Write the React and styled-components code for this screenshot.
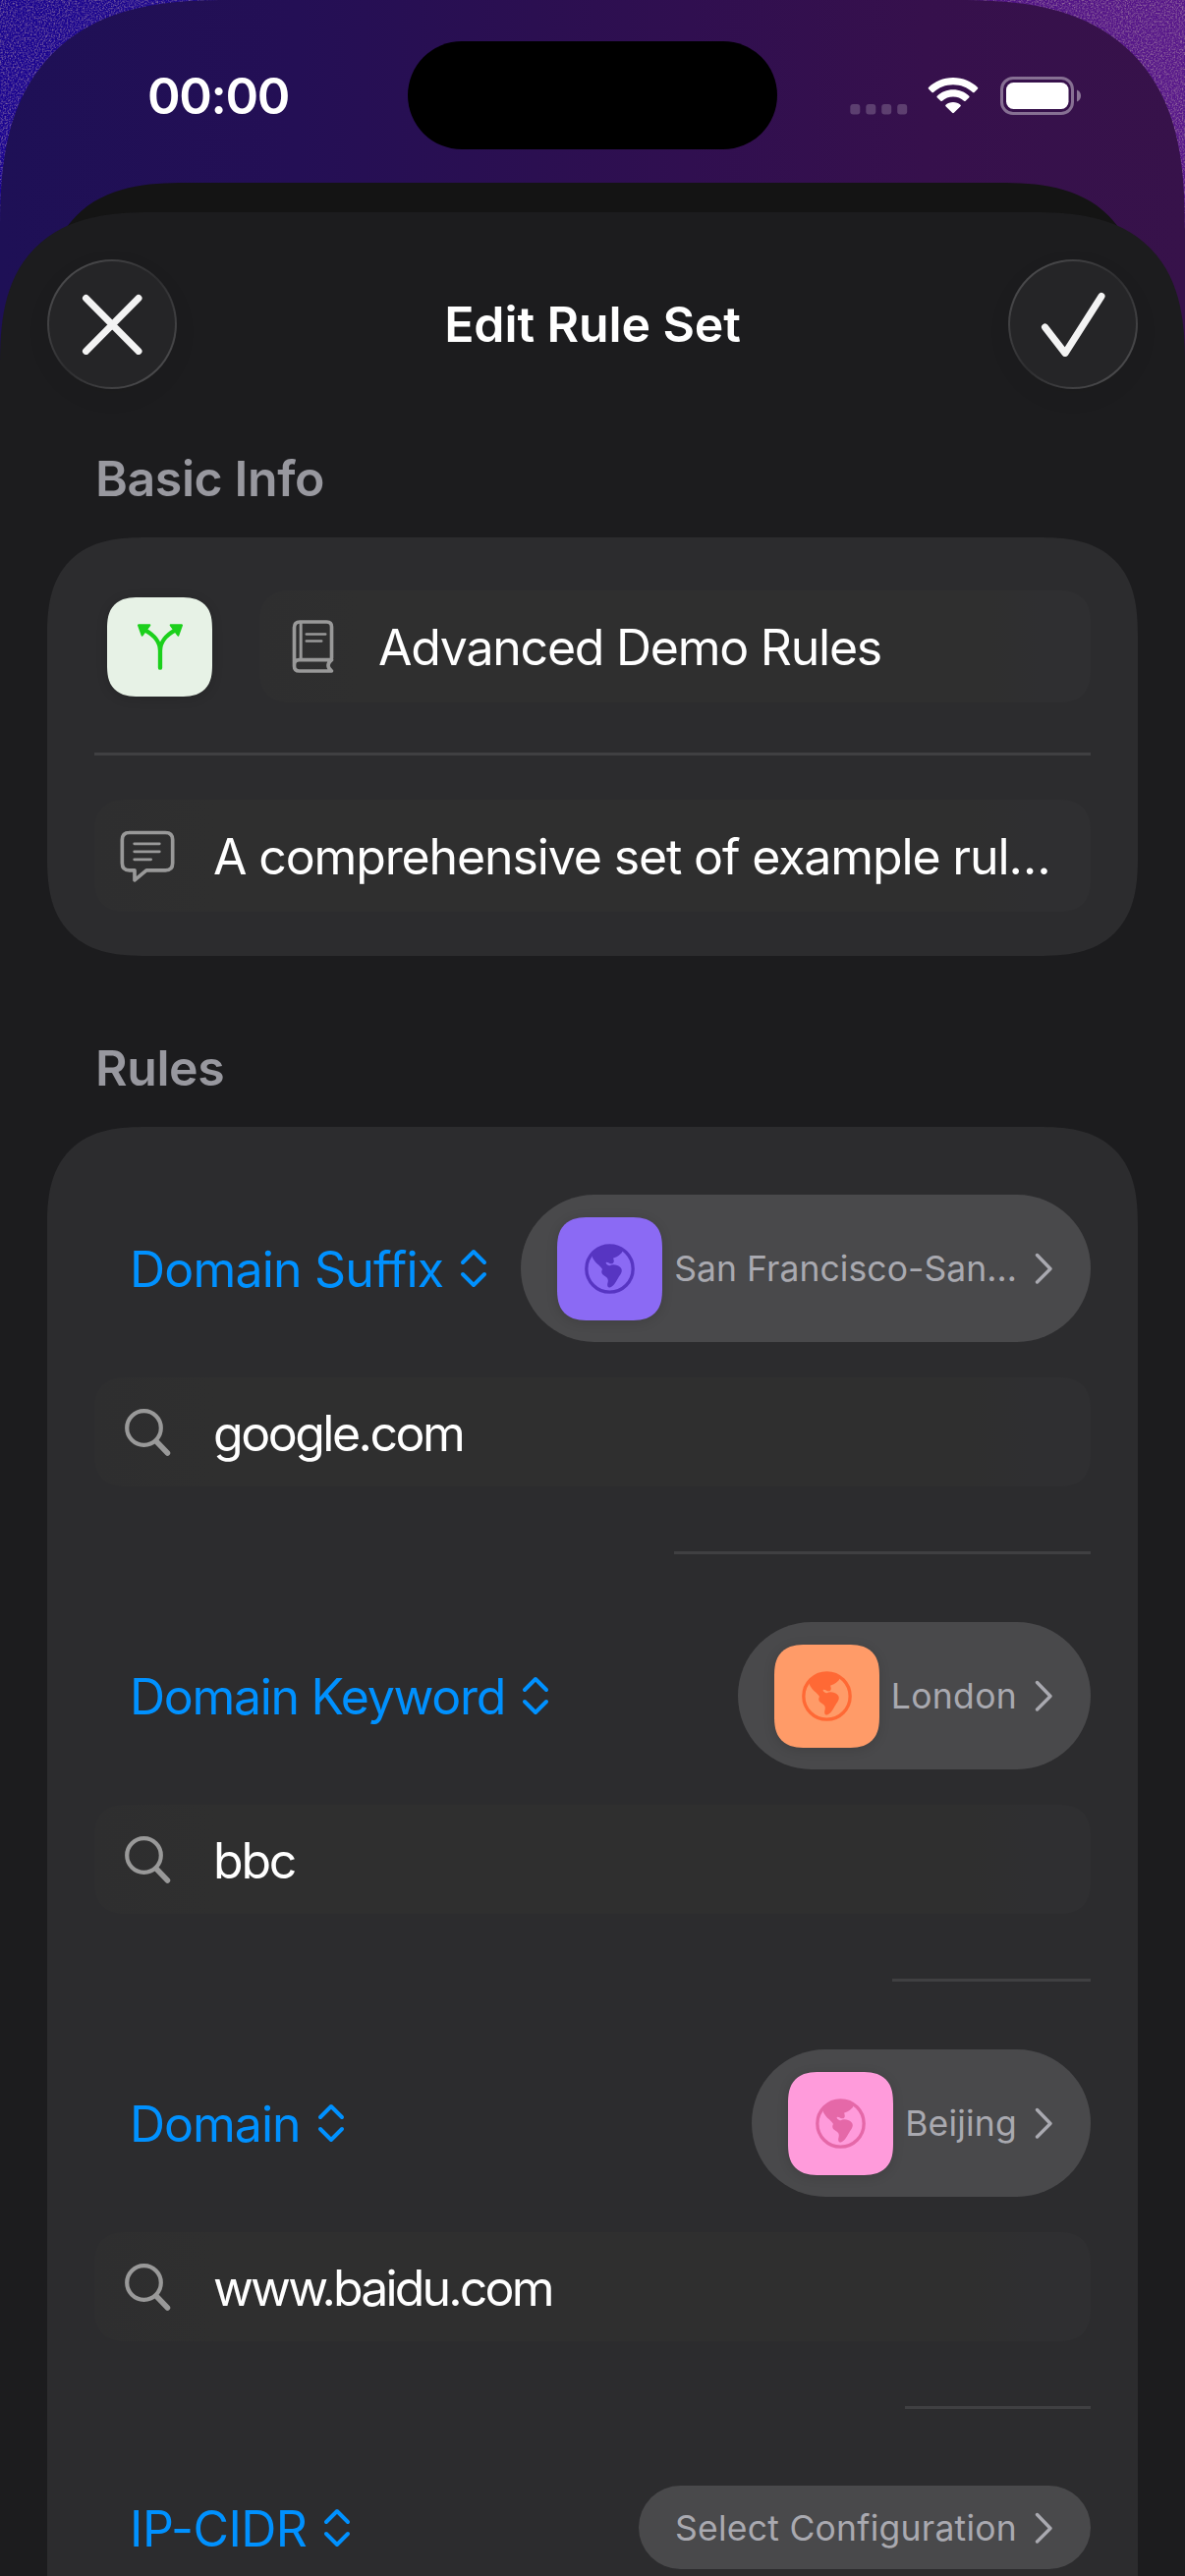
import React from "react";
import styled, { createGlobalStyle, css } from "styled-components";

const GlobalStyle = createGlobalStyle`
  * {
    box-sizing: border-box;
  }
  body {
    margin: 0;
    background: #1c1c1e;
    font-family: Inter, "Liberation Sans", sans-serif;
  }
  svg {
    display: block;
    flex-shrink: 0;
  }
`;

// iOS style continuous corners, plain radius where corner-shape is missing
const smooth = (r) => css`
  border-radius: ${r}px;
  @supports (corner-shape: superellipse(1.4)) {
    border-radius: ${r * 1.3}px;
    corner-shape: superellipse(1.4);
  }
`;

const smoothTop = (r) => css`
  border-radius: ${r}px ${r}px 0 0;
  @supports (corner-shape: superellipse(1.4)) {
    border-radius: ${r * 1.3}px ${r * 1.3}px 0 0;
    corner-shape: superellipse(1.4);
  }
`;

const Screen = styled.div`
  position: relative;
  width: 1206px;
  height: 2622px;
  overflow: hidden;
  background: linear-gradient(90deg, #1a0490, #200a8c 25%, #4a1080 75%, #58188a);
`;

const Noise = styled.svg`
  position: absolute;
  inset: 0;
`;

const Phone = styled.div`
  position: relative;
  display: flex;
  flex-direction: column;
  height: 100%;
  overflow: hidden;
  background: linear-gradient(90deg, #1e1056, #240f55 25%, #2b0f51 45%, #300f50 58%, #36104c 78%, #37124a);
  ${smoothTop(180)}
`;

const StatusBar = styled.div`
  display: grid;
  flex-shrink: 0;
  grid-template-columns: 415px 376px 415px;
  height: 186px;
  padding-top: 42px;
`;

const Time = styled.div`
  height: 112px;
  padding-left: 29px;
  line-height: 112px;
  text-align: center;
  color: #fff;
  font-size: 51px;
  font-weight: 600;
  letter-spacing: -1.4px;
`;

const Island = styled.div`
  height: 110px;
  border-radius: 55px;
  background: #000;
`;

const StatusIcons = styled.div`
  display: flex;
  align-items: flex-start;
  padding: 36px 0 0 74px;
`;

const BackSheet = styled.div`
  flex-shrink: 0;
  height: 180px;
  margin: 0 44px;
  background: #141414;
  ${smoothTop(112)}
`;

const Sheet = styled.div`
  display: flex;
  flex: 1;
  flex-direction: column;
  min-height: 0;
  margin-top: -150px;
  padding: 48px 48px 0;
  background: #1c1c1e;
  ${smoothTop(120)}
`;

const Header = styled.div`
  display: flex;
  flex-shrink: 0;
  align-items: center;
  justify-content: space-between;
  height: 132px;
`;

const RoundButton = styled.button`
  display: flex;
  align-items: center;
  justify-content: center;
  width: 132px;
  height: 132px;
  padding: 0;
  border: 2.5px solid transparent;
  border-radius: 50%;
  background:
    linear-gradient(#252527, #252527) padding-box,
    linear-gradient(135deg, #545456, #2e2e30 50%, #545456) border-box;
  box-shadow: 0 8px 24px rgba(0, 0, 0, 0.06);
`;

const Title = styled.h1`
  margin: 0;
  color: #fff;
  font-size: 50px;
  font-weight: 600;
  line-height: 62px;
  letter-spacing: -0.1px;
`;

const SectionTitle = styled.h2`
  flex-shrink: 0;
  margin: ${(p) => p.$top}px 0 30px 49px;
  color: #98989f;
  font-size: 50px;
  font-weight: 600;
  line-height: 60px;
  letter-spacing: -0.4px;
`;

const Card = styled.div`
  display: flex;
  flex-shrink: 0;
  flex-direction: column;
  background: #2c2c2e;
  ${smooth(78)}
`;

const InfoCard = styled(Card)`
  height: 426px;
  padding: 54px 48px 45px;
`;

const RulesCard = styled(Card)`
  height: 1600px;
  padding: 0 48px;
`;

const NameRow = styled.div`
  display: flex;
  align-items: center;
  gap: 48px;
  padding-left: 13px;
`;

const IconTile = styled.div`
  display: flex;
  flex-shrink: 0;
  align-items: center;
  justify-content: center;
  width: 107px;
  height: ${(p) => p.$height || 105}px;
  color: ${(p) => p.$color};
  background: ${(p) => p.$bg};
  box-shadow: 0 2px 12px rgba(0, 0, 0, 0.14);
  ${smooth(25)}
`;

const Field = styled.div`
  display: flex;
  flex: ${(p) => (p.$grow ? "1" : "none")};
  align-items: center;
  height: ${(p) => p.$height || 114}px;
  padding-left: 24px;
  color: #999;
  background: linear-gradient(90deg, #2e2e2f, #2f2f2f 12%, #2f2f2f 88%, #2f2f31 94%);
  ${smooth(27)}
`;

const FieldIcon = styled.div`
  display: flex;
  flex-shrink: 0;
  justify-content: center;
  width: 60px;
  margin-right: 37px;
`;

const FieldText = styled.span`
  padding-top: 2px;
  color: #fff;
  font-size: 50px;
  line-height: 62px;
  letter-spacing: ${(p) => p.$track}px;
  white-space: nowrap;
`;

const Divider = styled.div`
  flex-shrink: 0;
  align-self: flex-end;
  width: ${(p) => (p.$width ? p.$width + "px" : "100%")};
  height: 3px;
  background: #404042;
`;

const InfoDivider = styled(Divider)`
  margin: 51px 0 45px;
`;

const Rule = styled.div`
  display: flex;
  flex-shrink: 0;
  flex-direction: column;
  padding-top: 69px;
`;

const RuleHead = styled.div`
  display: flex;
  align-items: center;
  justify-content: space-between;
  min-height: 103px;
  padding-left: 36px;
`;

const RuleType = styled.div`
  display: flex;
  align-items: center;
  gap: 17px;
  color: #0091ff;
`;

const RuleName = styled.span`
  padding-top: 2px;
  font-size: 50px;
  line-height: 62px;
  letter-spacing: ${(p) => p.$track}px;
  white-space: nowrap;
`;

const Pill = styled.div`
  display: flex;
  align-items: center;
  height: ${(p) => (p.$tall ? 150 : 85)}px;
  padding: 0 39px 0 37px;
  border-radius: 75px;
  color: #a9a9b0;
  background: #49494b;
`;

const PillText = styled.span`
  margin: 0 18px 0 ${(p) => (p.$icon ? 12 : 0)}px;
  padding-top: 2px;
  font-size: 35.5px;
  line-height: 44px;
  letter-spacing: ${(p) => p.$track}px;
  white-space: nowrap;
`;

const RuleField = styled(Field)`
  margin: 36px 0 66px;
`;

const Cellular = () => (
  <svg width="59" height="11" viewBox="0 0 59 11" style={{ marginTop: 28 }} fill="rgba(255,255,255,0.2)">
    <rect x="0.3" width="10" height="10.5" rx="3" />
    <rect x="16.3" width="10" height="10.5" rx="3" />
    <rect x="32.2" width="10" height="10.5" rx="3" />
    <rect x="48.2" width="10" height="10.5" rx="3" />
  </svg>
);

const Wifi = () => (
  <svg width="52" height="38" viewBox="0 0 52 38" style={{ marginLeft: 20 }} fill="#fff">
    <path d="M26 1 C36 1 45 5 51 11 Q51.800 11.800 51 12.600 L47.600 16 Q46.800 16.700 46 16 C40.500 11 33.500 8.300 26 8.300 C18.500 8.300 11.500 11 6 16 Q5.200 16.700 4.400 16 L1 12.600 Q0.200 11.800 1 11 C7 5 16 1 26 1 Z" />
    <path d="M26 13.300 C32.300 13.300 38 15.600 42.300 19.700 Q43 20.400 42.300 21.200 L38.600 24.700 Q37.900 25.400 37.100 24.700 C34.100 22 30.200 20.500 26 20.500 C21.800 20.500 17.900 22 14.900 24.700 Q14.100 25.400 13.400 24.700 L9.700 21.200 Q9 20.400 9.700 19.700 C14 15.600 19.700 13.300 26 13.300 Z" />
    <path d="M26 26 C28.900 26 31.500 27 33.500 28.700 Q34.300 29.400 33.500 30.200 L26.900 36.800 Q26 37.700 25.100 36.800 L18.500 30.200 Q17.700 29.400 18.500 28.700 C20.500 27 23.100 26 26 26 Z" />
  </svg>
);

const Battery = () => (
  <svg width="83" height="39" viewBox="0 0 83 39" style={{ marginLeft: 22 }}>
    <rect x="1.500" y="1.500" width="72" height="36" rx="11.500" fill="none" stroke="rgba(255,255,255,0.4)" strokeWidth="3" />
    <rect x="6" y="6" width="63.500" height="27" rx="7.500" fill="#fff" />
    <path d="M78 13.500 C80.500 14.500 82 16.800 82 19.500 C82 22.200 80.500 24.500 78 25.500 Z" fill="rgba(255,255,255,0.42)" />
  </svg>
);

const CloseIcon = () => (
  <svg width="62" height="62" viewBox="0 0 62 62" stroke="#f3f3f3" strokeWidth="7" strokeLinecap="round">
    <path d="M4.500 4.500 L58 58.500 M58 4.500 L4.500 58.500" />
  </svg>
);

const CheckIcon = () => (
  <svg width="66" height="66" viewBox="0 0 66 66" fill="none" stroke="#f3f3f3" strokeWidth="7" strokeLinecap="round" strokeLinejoin="round">
    <path d="M4.500 36 L25 62.500 L62 4.500" />
  </svg>
);

const BranchIcon = () => (
  <svg width="46" height="47" viewBox="118 118 138 141" fill="none" stroke="#1cd01c" strokeLinecap="round" strokeLinejoin="round">
    <path d="M187 252 V200 C187 175 168 152 142 138 M187 200 C187 175 206 152 232 138" strokeWidth="13" />
    <path d="M121 122 H155 L132 153 Z M253 122 H219 L242 153 Z" fill="#1cd01c" strokeWidth="6" />
  </svg>
);

const BookIcon = () => (
  <svg width="43" height="54" viewBox="590 106 128 162" fill="none" stroke="currentColor" strokeLinecap="round" strokeLinejoin="round">
    <path d="M711 222 V127 Q711 112 696 112 H614 Q597 112 597 129 V247 Q597 262 612 262 H711 C697 252 697 238 711 228 H612 Q597 228 597 243" strokeWidth="11" />
    <path d="M617 114 V225" strokeWidth="9" />
    <path d="M634 149.500 H692 M634 170.500 H680" strokeWidth="8" />
  </svg>
);

const CommentIcon = () => (
  <svg width="56" height="53" viewBox="68 746 168 158" fill="none" stroke="currentColor" strokeLinecap="round" strokeLinejoin="round">
    <path d="M96 753 H207 Q229 753 229 775 V846 Q229 868 207 868 H149 L113 898 V868 H97 Q75 868 75 846 V775 Q75 753 97 753" strokeWidth="11" />
    <path d="M112 787 H189 M112 811 H189 M112 835 H163" strokeWidth="8" />
  </svg>
);

const SearchIcon = () => (
  <svg width="47" height="48" viewBox="0 0 47 48" fill="none" stroke="currentColor" strokeLinecap="round">
    <circle cx="19.500" cy="19.500" r="17.300" strokeWidth="4.2" />
    <path d="M32 33 L43.500 45" strokeWidth="5.5" />
  </svg>
);

const UpDownIcon = () => (
  <svg width="28" height="40" viewBox="0 0 28 40" fill="none" stroke="currentColor" strokeWidth="4" strokeLinecap="round" strokeLinejoin="round">
    <path d="M3 14 L14 3 L25 14 M3 26 L14 37 L25 26" />
  </svg>
);

const ChevronIcon = () => (
  <svg width="18" height="32" viewBox="0 0 18 32" fill="none" stroke="currentColor" strokeWidth="3.4" strokeLinecap="round" strokeLinejoin="round">
    <path d="M2.500 2.500 L16 16.500 L2.500 30" />
  </svg>
);

const GlobeIcon = () => (
  <svg width="51" height="51" viewBox="111 108 153 153" fill="currentColor">
    <circle cx="187.500" cy="184.500" r="71" fill="none" stroke="currentColor" strokeWidth="10" />
    <path d="M134 142 C146 122 166 112 188 112 C203 112 217 117 229 127 L224 136 C219 142 207 150 198 152 C202 160 201 168 194 169 C188 170 184 164 178 164 C172 166 180 174 188 175 C196 169 212 172 220 180 C228 188 224 197 216 208 C208 221 202 236 190 241 C180 244 179 234 182 225 C184 215 180 211 172 206 C164 202 160 195 165 186 C162 178 148 170 141 160 C136 153 133 148 134 142 Z" />
  </svg>
);

const rules = [
  {
    type: "Domain Suffix",
    typeTrack: -0.8,
    config: "San Francisco-San…",
    configTrack: 0.06,
    color: "#5735c2",
    bg: "#8b6af4",
    value: "google.com",
    valueTrack: -2.5,
    line: 424,
  },
  {
    type: "Domain Keyword",
    typeTrack: -1.3,
    config: "London",
    configTrack: 0.3,
    color: "#ff6935",
    bg: "#ff9b68",
    value: "bbc",
    valueTrack: -2.2,
    line: 202,
  },
  {
    type: "Domain",
    typeTrack: -1,
    config: "Beijing",
    configTrack: 0.2,
    color: "#e568a8",
    bg: "#ff9bdb",
    value: "www.baidu.com",
    valueTrack: -2.85,
    line: 189,
  },
  {
    type: "IP-CIDR",
    typeTrack: -0.55,
    config: "Select Configuration",
    configTrack: 0.24,
  },
];

const RuleItem = ({ rule }) => (
  <Rule>
    <RuleHead>
      <RuleType>
        <RuleName $track={rule.typeTrack}>{rule.type}</RuleName>
        <UpDownIcon />
      </RuleType>
      <Pill $tall={!!rule.bg}>
        {rule.bg && (
          <IconTile $color={rule.color} $bg={rule.bg}>
            <GlobeIcon />
          </IconTile>
        )}
        <PillText $icon={!!rule.bg} $track={rule.configTrack}>
          {rule.config}
        </PillText>
        <ChevronIcon />
      </Pill>
    </RuleHead>
    {rule.value && (
      <>
        <RuleField $height={111}>
          <FieldIcon>
            <SearchIcon />
          </FieldIcon>
          <FieldText $track={rule.valueTrack}>{rule.value}</FieldText>
        </RuleField>
        <Divider $width={rule.line} />
      </>
    )}
  </Rule>
);

const App = () => {
  return (
    <>
      <GlobalStyle />
      <Screen>
        <Noise width="1206" height="400">
          <filter id="grain">
            <feTurbulence type="fractalNoise" baseFrequency="0.6" numOctaves="2" />
            <feColorMatrix values="0 0 0 0 0.5  0 0 0 0 0.35  0 0 0 0 0.4  0 0 0 1.4 -0.58" />
          </filter>
          <rect width="1206" height="400" filter="url(#grain)" />
        </Noise>
        <Phone>
          <StatusBar>
            <Time>00:00</Time>
            <Island />
            <StatusIcons>
              <Cellular />
              <Wifi />
              <Battery />
            </StatusIcons>
          </StatusBar>
          <BackSheet />
          <Sheet>
            <Header>
              <RoundButton>
                <CloseIcon />
              </RoundButton>
              <Title>Edit Rule Set</Title>
              <RoundButton>
                <CheckIcon />
              </RoundButton>
            </Header>
            <SectionTitle $top={61}>Basic Info</SectionTitle>
            <InfoCard>
              <NameRow>
                <IconTile $height={101} $bg="#e7f2e6">
                  <BranchIcon />
                </IconTile>
                <Field $grow>
                  <FieldIcon>
                    <BookIcon />
                  </FieldIcon>
                  <FieldText $track={-1.25}>Advanced Demo Rules</FieldText>
                </Field>
              </NameRow>
              <InfoDivider />
              <Field>
                <FieldIcon>
                  <CommentIcon />
                </FieldIcon>
                <FieldText $track={-1.13}>A comprehensive set of example rul…</FieldText>
              </Field>
            </InfoCard>
            <SectionTitle $top={84}>Rules</SectionTitle>
            <RulesCard>
              {rules.map((rule) => (
                <RuleItem key={rule.type} rule={rule} />
              ))}
            </RulesCard>
          </Sheet>
        </Phone>
      </Screen>
    </>
  );
};

export default App;
